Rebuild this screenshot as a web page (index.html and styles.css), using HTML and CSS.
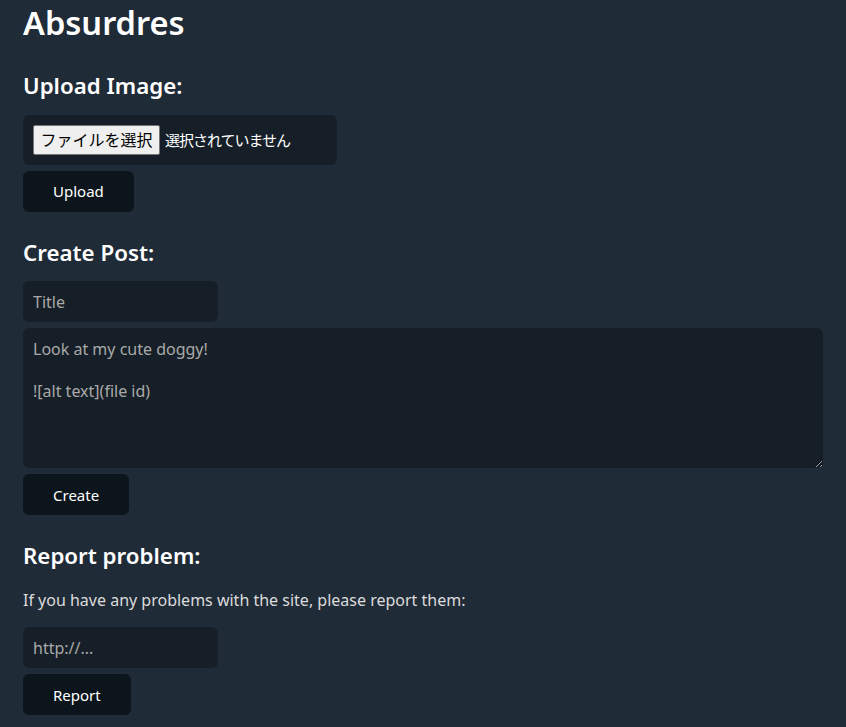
FILE: index.html
```html
<!DOCTYPE html>
<html lang="en">
<head>
<meta charset="utf-8">
<title>Absurdres</title>
<link rel="stylesheet" href="styles.css">
</head>
<body>
<h1 class="title">Absurdres</h1>

<h2 class="section-title">Upload Image:</h2>
<form class="form">
  <label class="file-input">
    <span class="file-button">ファイルを選択</span>
    <span class="file-status">選択されていません</span>
    <input type="file" class="file-native">
  </label>
  <button type="button" class="btn">Upload</button>
</form>

<h2 class="section-title">Create Post:</h2>
<form class="form">
  <input type="text" class="field field-short" placeholder="Title">
  <textarea class="field field-area" rows="6" placeholder="Look at my cute doggy!

![alt text](file id)"></textarea>
  <button type="button" class="btn">Create</button>
</form>

<h2 class="section-title">Report problem:</h2>
<p class="text">If you have any problems with the site, please report them:</p>
<form class="form">
  <input type="text" class="field field-short" placeholder="http://...">
  <button type="button" class="btn">Report</button>
</form>
</body>
</html>
```

FILE: styles.css
```css
html {
  background: #202b38;
}

body {
  margin: 0 auto;
  padding: 0 10px;
  max-width: 800px;
  background: #202b38;
  color: #dbdbdb;
  font-family: "Noto Sans", "Noto Sans CJK JP", sans-serif;
  font-size: 16px;
  line-height: 1.4;
}

.title {
  margin: 0 0 12px;
  color: #ffffff;
  font-size: 32.6px;
  line-height: 45px;
  font-weight: 600;
}

.section-title {
  margin: 24px 0 12px;
  color: #ffffff;
  font-size: 22.3px;
  line-height: 33.6px;
  font-weight: 600;
}

.form {
  display: flex;
  flex-direction: column;
  align-items: flex-start;
}

.text {
  margin: 16px 0;
}

.field {
  box-sizing: border-box;
  display: block;
  margin: 0 0 6px;
  padding: 11px 10px 10px;
  border: none;
  border-radius: 6px;
  background: #161f27;
  color: #dbdbdb;
  font-family: inherit;
  font-size: 16px;
  line-height: 21px;
  outline: none;
}

.field::placeholder {
  color: #a9a9a9;
}

.field-short {
  width: 195px;
  height: 41px;
  padding: 10px;
}

.field-area {
  width: 800px;
  height: 140px;
  resize: both;
}

.file-input {
  box-sizing: border-box;
  display: flex;
  align-items: center;
  width: 314px;
  height: 50px;
  margin: 0 0 6px;
  padding: 10px;
  border-radius: 6px;
  background: #161f27;
  color: #ffffff;
  font-family: "Noto Sans CJK JP", sans-serif;
  font-size: 16px;
}

.file-button {
  box-sizing: border-box;
  display: inline-flex;
  align-items: center;
  justify-content: center;
  width: 127px;
  height: 30px;
  margin-right: 5px;
  border: 1px solid #767676;
  border-radius: 2px;
  background: #efefef;
  color: #000000;
}

.file-status {
  font-size: 15px;
  letter-spacing: -1px;
}

.file-native {
  display: none;
}

.btn {
  box-sizing: border-box;
  height: 41px;
  margin: 0;
  padding: 0 30px;
  border: none;
  border-radius: 6px;
  background: #0c151c;
  color: #ffffff;
  font-family: inherit;
  font-size: 15px;
}
```
